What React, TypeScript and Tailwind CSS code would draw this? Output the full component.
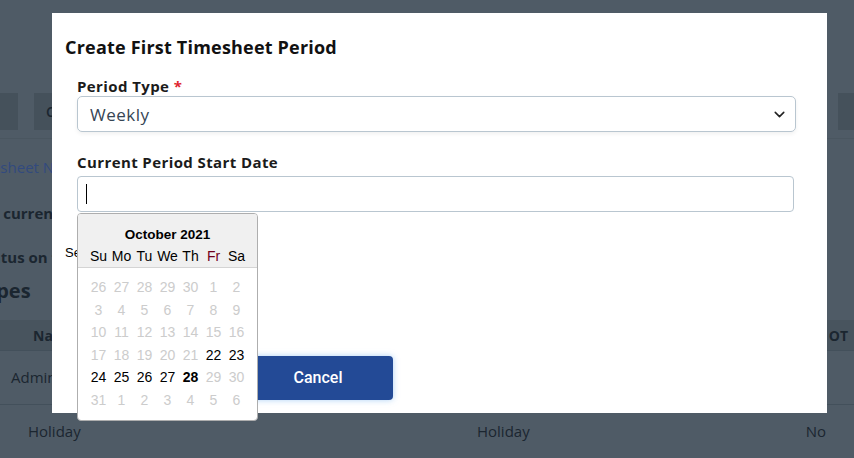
import { ChevronDown } from 'lucide-react';

const sans = { fontFamily: '"Open Sans", "Noto Sans", sans-serif' };
const arial = { fontFamily: '"Liberation Sans", Arial, sans-serif' };

type Day = { n: number; on?: boolean; bold?: boolean };

// October 2021 grid, only 22-28 selectable
const weeks: Day[][] = [
  [26, 27, 28, 29, 30, 1, 2].map(n => ({ n })),
  [3, 4, 5, 6, 7, 8, 9].map(n => ({ n })),
  [10, 11, 12, 13, 14, 15, 16].map(n => ({ n })),
  [17, 18, 19, 20, 21].map(n => ({ n })).concat([{ n: 22, on: true }, { n: 23, on: true }]),
  [{ n: 24, on: true }, { n: 25, on: true }, { n: 26, on: true }, { n: 27, on: true }, { n: 28, on: true, bold: true }, { n: 29 }, { n: 30 }],
  [31, 1, 2, 3, 4, 5, 6].map(n => ({ n })),
];

const dayNames = ['Su', 'Mo', 'Tu', 'We', 'Th', 'Fr', 'Sa'];

function DatePicker() {
  return (
    <div
      className="absolute left-[77px] top-[213px] w-[181px] rounded-[4px] border border-[#aeaeae] bg-white overflow-hidden z-20"
      style={arial}
    >
      <div className="bg-[#f0f0f0] border-b border-[#d4d4d4] pt-[12px]">
        <div className="text-center text-[13.5px] font-bold text-black leading-[18px]">October 2021</div>
        <div className="flex px-[9px] mt-[1px]">
          {dayNames.map(d => (
            <div key={d} className={`w-[23px] text-center text-[14px] leading-[22px] ${d === 'Fr' ? 'text-[#70001c]' : 'text-black'}`}>
              {d}
            </div>
          ))}
        </div>
      </div>
      <div className="px-[9px] pt-[8px] pb-[8px]">
        {weeks.map((w, i) => (
          <div key={i} className="flex">
            {w.map((d, j) => (
              <div
                key={j}
                className={`w-[23px] text-center text-[14px] leading-[22.6px] ${d.on ? 'text-black' : 'text-[#cccccc]'} ${d.bold ? 'font-bold' : ''}`}
              >
                {d.n}
              </div>
            ))}
          </div>
        ))}
      </div>
    </div>
  );
}

function Modal() {
  return (
    <div className="absolute left-[52px] top-[13px] w-[775px] h-[400px] bg-white z-10" style={sans}>
      <h2 className="pl-[13px] pt-[22px] text-[18px] font-bold text-[#111] leading-[24px] tracking-[0.2px]">Create First Timesheet Period</h2>
      <div className="pl-[25px] pr-[31px]">
        <label className="block mt-[18px] text-[15px] font-bold text-[#1b1b1b] leading-[18px] tracking-[0.4px]">
          Period Type <span className="text-[#e0262f]">*</span>
        </label>
        <div className="mt-[1px] h-[36px] rounded-[5px] border border-[#b9c6d0] shadow-[0_2px_4px_rgba(0,0,0,0.06)] flex items-center justify-between pl-[12px] pr-[7px]">
          <span className="text-[17px] text-[#364554] tracking-[0.5px] pt-[2px]">Weekly</span>
          <ChevronDown className="w-[17px] h-[17px] text-[#222]" strokeWidth={2.2} />
        </div>
        <label className="block mt-[21px] text-[15px] font-bold text-[#1b1b1b] leading-[18px] tracking-[0.4px]">Current Period Start Date</label>
        <div className="mt-[5px] mr-[2px] h-[36px] rounded-[4px] border border-[#b9c6d0] flex items-center pl-[8px]">
          <div className="w-px h-[20px] bg-black" />
        </div>
        <div className="mt-[33px] -ml-[12px] text-[13px] leading-[16px] text-black" style={arial}>
          Select a date
        </div>
        <div className="mt-[95px] flex" style={{ fontFamily: 'Roboto, sans-serif' }}>
          <button className="ml-[3px] w-[140px] h-[44px] rounded-[4px] bg-[#234a96] text-white text-[16px] font-medium">Save</button>
          <button className="ml-[23px] w-[150px] h-[44px] rounded-[4px] bg-[#234a96] text-white text-[16px] font-medium shadow-[0_0_6px_rgba(120,180,240,0.6)]">Cancel</button>
        </div>
      </div>
    </div>
  );
}

function Background() {
  return (
    <div className="w-[854px] h-[458px] bg-[#4f5b66] text-[#1b2630]" style={sans}>
      <div className="pt-[93px] flex">
        <div className="w-[18px] h-[37px] bg-[#45515b]" />
        <div className="ml-[16px] w-[300px] h-[37px] bg-[#45515b] flex items-center pl-[12px] text-[14px] font-semibold">C</div>
        <div className="ml-auto w-[16px] h-[37px] bg-[#45515b]" />
      </div>
      <div className="mt-[8px] h-px bg-[#4a5660]" />
      <div className="mt-[18px] text-[15px] text-[#324a7e] -ml-[34px] leading-[20px]">Timesheet Notes</div>
      <div className="mt-[26px] text-[15px] font-bold -ml-[36px] leading-[20px]">Your current period</div>
      <div className="mt-[24px] text-[15px] font-bold -ml-[23px] leading-[20px]">Status on this</div>
      <div className="mt-[11px] text-[20px] font-bold -ml-[68px] leading-[26px]">Pay Types</div>
      <div className="mt-[16px] h-[31px] bg-[#48545e] border-b border-[#43505b] flex items-center justify-between text-[14px] font-bold pl-[33px] pr-[6px]">
        <span>Name</span>
        <span>OT</span>
      </div>
      <div className="h-[54px] border-b border-[#43505b] flex items-center text-[15px] pl-[11px]">Admin</div>
      <div className="h-[53px] flex items-center text-[15px] pl-[28px] pr-[28px]">
        <span className="w-[449px]">Holiday</span>
        <span className="flex-1">Holiday</span>
        <span>No</span>
      </div>
    </div>
  );
}

export default function App() {
  return (
    <div className="relative w-[854px] h-[458px] overflow-hidden">
      <Background />
      <Modal />
      <DatePicker />
    </div>
  );
}
